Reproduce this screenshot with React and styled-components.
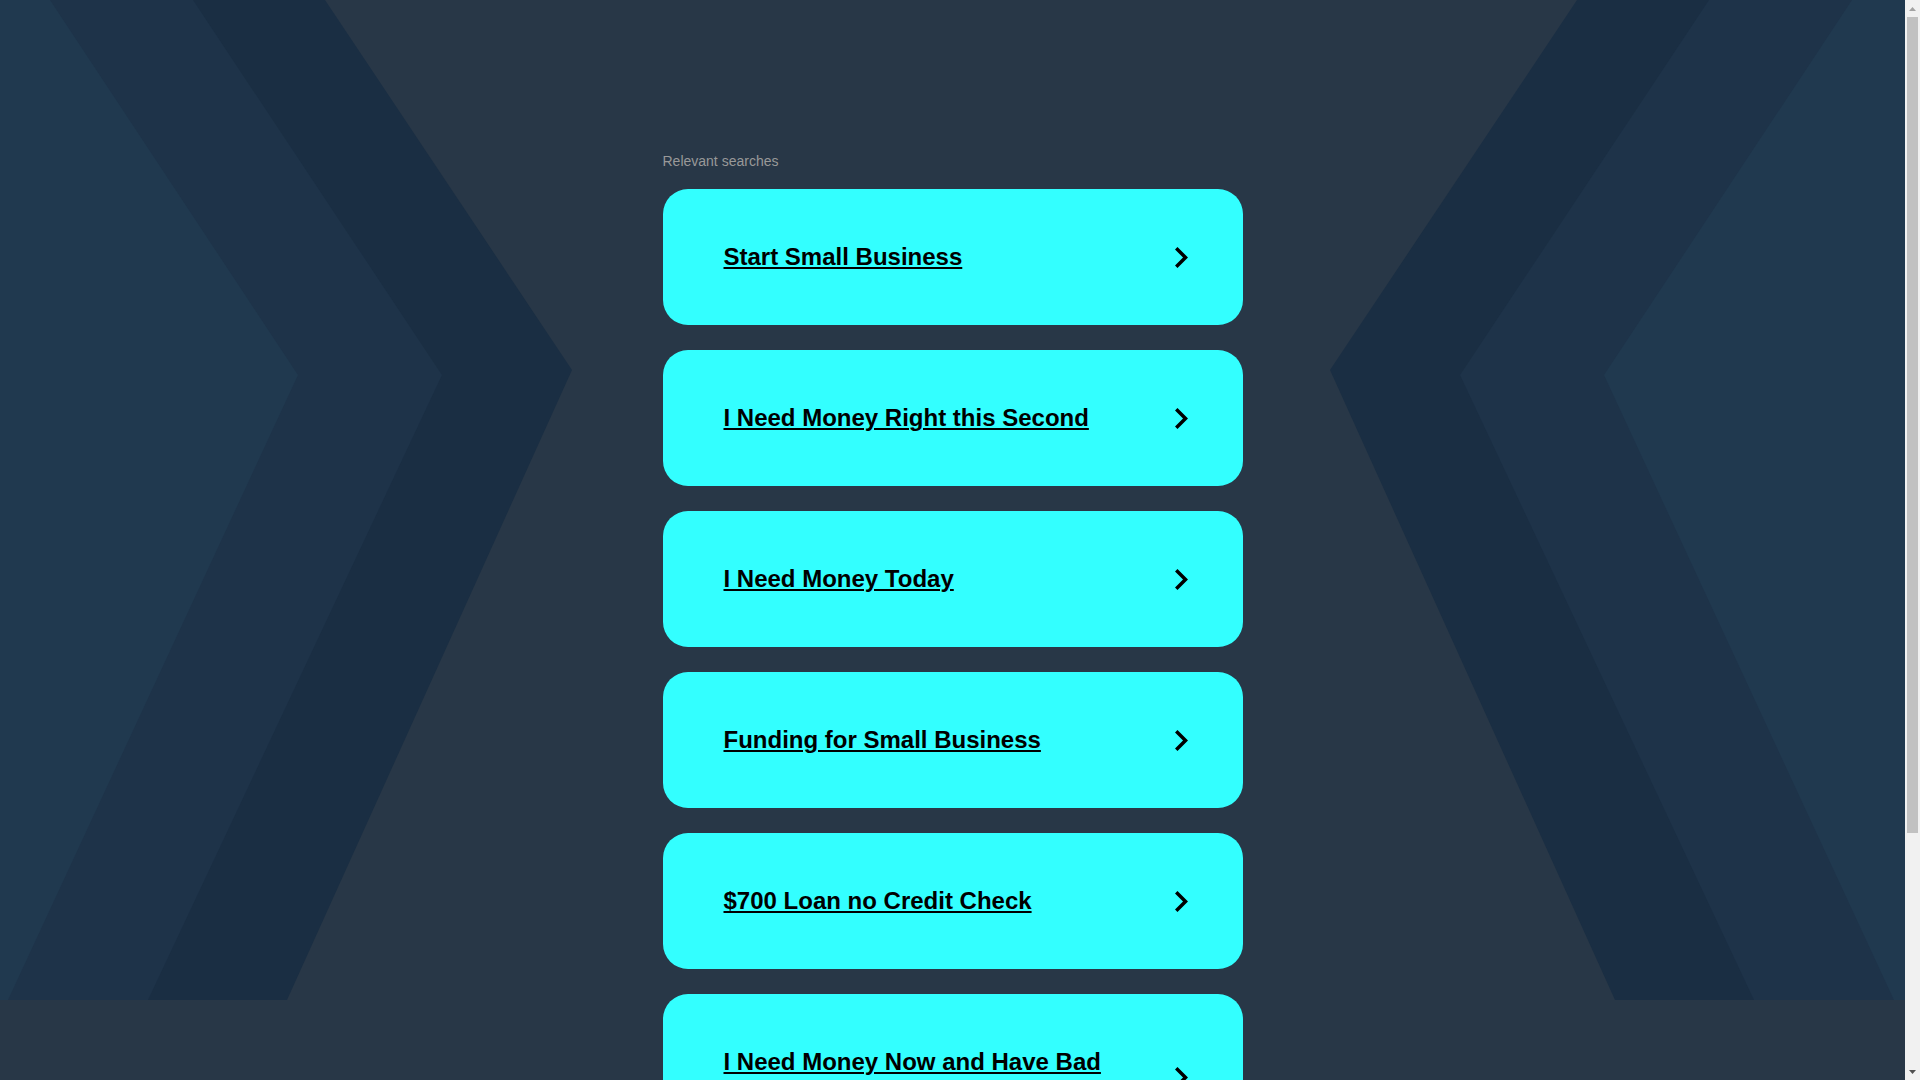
import styled, { createGlobalStyle } from "styled-components";

const GlobalStyle = createGlobalStyle`
  html,
  body {
    margin: 0;
    padding: 0;
    height: 100%;
    overflow: hidden;
    background-color: #283747;
    font-family: "Liberation Sans", Arial, sans-serif;
  }
`;

const Shell = styled.div`
  display: flex;
  height: 100vh;
`;

const Viewport = styled.div`
  flex: 1;
  min-width: 0;
  overflow-y: auto;
  scrollbar-width: none;

  &::-webkit-scrollbar {
    display: none;
  }
`;

const Track = styled.div`
  flex: none;
  width: 15px;
  display: flex;
  flex-direction: column;
  background-color: #f1f1f1;
`;

const StepButton = styled.div`
  flex: none;
  height: 17px;
  display: flex;
  align-items: center;
  justify-content: center;
`;

const ThumbArea = styled.div`
  flex: 1;
  padding: 0 2px;
`;

const Thumb = styled.div`
  height: 78%;
  background-color: #c1c1c1;
`;

const Page = styled.div`
  position: relative;
  min-height: 100%;
`;

const Backdrop = styled.svg`
  position: absolute;
  top: 0;
  left: 0;
  width: 100%;
  height: 1000px;
  z-index: 0;
  pointer-events: none;
`;

const Main = styled.main`
  position: relative;
  z-index: 1;
  width: 580px;
  margin: 0 auto;
  padding: 153px 0 60px;
`;

const Label = styled.p`
  margin: 0 0 20px;
  font-size: 14px;
  line-height: 16px;
  color: #999999;
`;

const List = styled.div`
  display: flex;
  flex-direction: column;
  gap: 25px;
`;

const Card = styled.a`
  display: flex;
  align-items: center;
  gap: 20px;
  padding: 53px 55px 53px 61px;
  background-color: #33ffff;
  border-radius: 25px;
  color: #000;
  text-decoration: none;
  cursor: pointer;
`;

const Term = styled.span`
  flex: 1;
  font-size: 24px;
  line-height: 30px;
  font-weight: bold;
  text-decoration: underline;
  text-decoration-thickness: 2px;
  text-underline-offset: 2px;
`;

const Arrow = styled.svg`
  flex: none;
  width: 13px;
  height: 21px;
`;

const searches = [
  "Start Small Business",
  "I Need Money Right this Second",
  "I Need Money Today",
  "Funding for Small Business",
  "$700 Loan no Credit Check",
  "I Need Money Now and Have Bad Credit",
];

// nested chevrons on the left; the right side mirrors them
const chevrons = [
  { fill: "#1a2e43", top: 325, tip: [572, 370], bottom: 287 },
  { fill: "#1e3349", top: 193, tip: [442, 375], bottom: 148 },
  { fill: "#20394f", top: 50, tip: [298, 375], bottom: 8 },
];

const mirror = (x) => 1902 - x;

function Chevron() {
  return (
    <Arrow viewBox="8.59 6 7.41 12" aria-hidden="true">
      <path d="M10 6L8.59 7.41 13.17 12l-4.58 4.59L10 18l6-6z" fill="#000" />
    </Arrow>
  );
}

function FakeScrollbar() {
  return (
    <Track aria-hidden="true">
      <StepButton>
        <svg width="7" height="4" viewBox="0 0 7 4">
          <path d="M0 4L3.5 0 7 4z" fill="#a3a3a3" />
        </svg>
      </StepButton>
      <ThumbArea>
        <Thumb />
      </ThumbArea>
      <StepButton>
        <svg width="7" height="4" viewBox="0 0 7 4">
          <path d="M0 0L3.5 4 7 0z" fill="#505050" />
        </svg>
      </StepButton>
    </Track>
  );
}

function App() {
  return (
    <>
      <GlobalStyle />
      <Shell>
        <Viewport>
          <Page>
            <Backdrop viewBox="0 0 1905 1000" preserveAspectRatio="xMidYMin slice">
              {chevrons.map((c) => (
                <g key={c.fill}>
                  <polygon
                    fill={c.fill}
                    points={`0,0 ${c.top},0 ${c.tip[0]},${c.tip[1]} ${c.bottom},1000 0,1000`}
                  />
                  <polygon
                    fill={c.fill}
                    points={`1905,0 ${mirror(c.top)},0 ${mirror(c.tip[0])},${c.tip[1]} ${mirror(
                      c.bottom
                    )},1000 1905,1000`}
                  />
                </g>
              ))}
            </Backdrop>
            <Main>
              <Label>Relevant searches</Label>
              <List>
                {searches.map((s) => (
                  <Card key={s}>
                    <Term>{s}</Term>
                    <Chevron />
                  </Card>
                ))}
              </List>
            </Main>
          </Page>
        </Viewport>
        <FakeScrollbar />
      </Shell>
    </>
  );
}

export default App;
